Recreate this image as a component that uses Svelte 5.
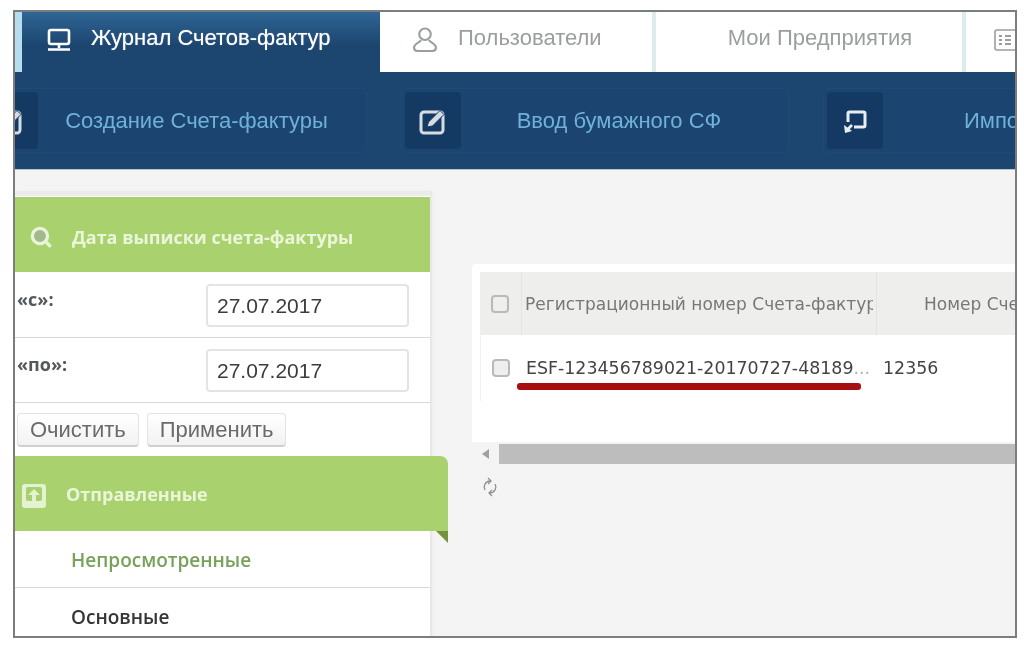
<script>
	const tools = [
		{ title: 'Создание Счета-фактуры', icon: 'create' },
		{ title: 'Ввод бумажного СФ', icon: 'edit' },
		{ title: 'Импорт', icon: 'import' }
	];
</script>

<div class="page">
	<div class="frame">
		<nav class="tabs">
			<div class="tab active">
				<svg width="26" height="24" viewBox="0 0 26 24" fill="none" stroke="currentColor" stroke-width="2.6">
					<rect x="3" y="2" width="20" height="14" rx="2" />
					<path d="M13 16v4M2 21.500h22" />
				</svg>
				<span>Журнал Счетов-фактур</span>
			</div>
			<div class="tab users">
				<svg width="30" height="28" viewBox="0 0 26 24" fill="none" stroke="currentColor" stroke-width="1.800">
					<circle cx="13" cy="7" r="5" />
					<path d="M9.500 12c-.5 2-6 3-6 6.500c0 2 1 3 3 3h13c2 0 3-1 3-3c0-3.500-5.500-4.500-6-6.500" />
				</svg>
				<span>Пользователи</span>
			</div>
			<div class="tab firms"><span>Мои Предприятия</span></div>
			<div class="tab last">
				<svg width="22" height="24" viewBox="0 0 22 24" fill="none" stroke="currentColor" stroke-width="1.600">
					<rect x="1" y="2" width="24" height="20" rx="2" />
					<path d="M5 8h3M5 12h3M5 16h3M11 8h6M11 12h6M11 16h6" stroke-width="2" />
				</svg>
			</div>
		</nav>

		<div class="toolbar">
			{#each tools as tool}
				<div class="tool {tool.icon}">
					<div class="tool-icon">
						{#if tool.icon === 'import'}
							<svg width="26" height="26" viewBox="0 0 26 26" fill="none" stroke="#e8eef2" stroke-width="3">
								<path d="M6 14V5.500c0-1 .5-1.500 1.500-1.500h14c1 0 1.500.5 1.500 1.500v12c0 1-.5 1.500-1.500 1.500H12" />
								<path d="M10 17l-5 5" stroke-width="2.600" />
								<path d="M2 17l1 8 7-2z" fill="#e8eef2" stroke="none" />
							</svg>
						{:else}
							<svg width="28" height="28" viewBox="0 0 28 28" fill="none">
								<rect x="2" y="5" width="22" height="21" rx="3" stroke="#d5dde2" stroke-width="3" />
								<path d="M8 20l1.500-5L21 3.500l4 4L13.500 19z" fill="#d5dde2" stroke="#143a63" stroke-width="1" />
							</svg>
						{/if}
					</div>
					<span class="tool-title">{tool.title}</span>
				</div>
			{/each}
		</div>

		<div class="content">
			<aside class="sidebar">
				<div class="filter-head">
					<svg width="26" height="26" viewBox="0 0 24 24" fill="#a3b98b" stroke="#e9f5d8" stroke-width="3">
						<circle cx="11" cy="11" r="7" />
						<path d="M16 16l5 5" />
					</svg>
					<span>Дата выписки счета-фактуры</span>
				</div>
				<div class="date-row">
					<span class="date-label">«с»:</span>
					<div class="date-input">27.07.2017</div>
				</div>
				<div class="date-row">
					<span class="date-label">«по»:</span>
					<div class="date-input">27.07.2017</div>
				</div>
				<div class="buttons">
					<button>Очистить</button>
					<button>Применить</button>
				</div>
				<div class="section">
					<svg width="26" height="28" viewBox="0 0 26 28" fill="none">
						<rect x="1" y="2" width="24" height="24" rx="3" fill="#e4f2cf" />
						<rect x="5" y="5" width="16" height="14" rx="2" fill="#a8d070" />
						<path d="M13 7l6 6h-4v6h-4v-6H7z" fill="#e4f2cf" />
					</svg>
					<span>Отправленные</span>
					<i class="fold"></i>
				</div>
				<div class="menu-item current">Непросмотренные</div>
				<div class="menu-item">Основные</div>
			</aside>

			<section class="grid-area">
				<div class="grid-card">
					<div class="grid-row head">
						<div class="cell check"><i class="checkbox"></i></div>
						<div class="cell reg"><span class="clip">Регистрационный номер Счета-фактуры</span></div>
						<div class="cell num">Номер Счета-фактуры</div>
					</div>
					<div class="grid-row body">
						<div class="cell check"><i class="checkbox"></i></div>
						<div class="cell reg">
							<span class="clip">ESF-123456789021-20170727-48189<span class="dots">...</span></span>
							<i class="mark"></i>
						</div>
						<div class="cell num">12356</div>
					</div>
				</div>
				<div class="scrollbar">
					<i class="arrow"></i>
					<div class="thumb"></div>
				</div>
				<svg class="refresh" width="16" height="20" viewBox="0 0 16 20" fill="none" stroke="#8d918c" stroke-width="1.300">
					<path d="M3 13a6 6 0 0 1 5-9M13 7a6 6 0 0 1-5 9" />
					<path d="M6 1l3 3-3 3M10 13l-3 3 3 3" />
				</svg>
			</section>
		</div>
	</div>
</div>

<style>
	:global(body) {
		margin: 0;
		background: #fff;
	}

	.page {
		width: 1024px;
		height: 646px;
		padding: 10px 7px 8px 13px;
		box-sizing: border-box;
		font-family: "Liberation Sans", Arial, sans-serif;
	}

	.frame {
		height: 628px;
		box-sizing: border-box;
		border: 2px solid #7d7d7d;
		overflow: hidden;
		background: #f4f4f4;
		filter: blur(0.45px);
	}

	.tabs {
		display: flex;
		height: 60px;
		background: #fff;
		font-size: 22px;
		color: #9a9e9e;
	}

	.tab {
		display: flex;
		align-items: center;
		box-sizing: border-box;
		padding-bottom: 8px;
		flex: none;
		border-left: 7px solid #dcebec;
		white-space: nowrap;
	}

	.tab svg {
		flex: none;
		margin-top: 4px;
	}

	.tab.active {
		width: 365px;
		padding-left: 24px;
		gap: 19px;
		color: #fff;
		border-left-color: #b5dcef;
		background: linear-gradient(#2f6595, #1c4670 55%);
		text-shadow: 0 0 1px rgba(255, 255, 255, 0.6);
	}

	.tab.users {
		width: 272px;
		padding-left: 30px;
		gap: 18px;
		border-left: 0;
	}

	.tab.firms {
		width: 310px;
		justify-content: center;
		border-left: 4px solid #dcebec;
		padding-left: 22px;
	}

	.tab.last {
		flex: 1;
		min-width: 0;
		padding-left: 28px;
		border-left: 4px solid #dcebec;
		overflow: hidden;
	}

	.toolbar {
		display: flex;
		height: 98px;
		padding-top: 16px;
		box-sizing: border-box;
		gap: 34px;
		background: #1c4670;
		border-bottom: 1px solid #b5c6d4;
		margin-left: -37px;
	}

	.tool {
		display: flex;
		flex: none;
		align-items: center;
		height: 65px;
		box-sizing: border-box;
		padding: 0 3px;
		border: 1px solid #1f4a75;
		border-radius: 5px;
		background: #1b4470;
		font-size: 22px;
		color: #6fb1d8;
	}

	.tool-icon {
		display: flex;
		align-items: center;
		justify-content: center;
		flex: none;
		width: 56px;
		height: 57px;
		border-radius: 4px;
		background: #143a63;
	}

	.tool.create {
		width: 389px;
	}

	.tool.edit {
		width: 388px;
	}

	.tool.import {
		width: 300px;
	}

	.tool-title {
		flex: 1;
		padding-right: 8px;
		text-align: center;
		white-space: nowrap;
	}

	.tool.import .tool-title {
		text-align: left;
		padding: 0 0 0 81px;
	}

	.content {
		display: flex;
		height: 466px;
		padding-top: 21px;
		box-sizing: border-box;
	}

	.sidebar {
		flex: none;
		width: 415px;
		background: #fff;
		border-top: 5px solid #ececec;
		box-shadow: 2px 0 0 #e8e8e8, 3px 0 2px #ededed;
		font-family: "Open Sans", sans-serif;
	}

	.filter-head {
		display: flex;
		align-items: center;
		gap: 18px;
		height: 75px;
		margin: 1px 0;
		padding: 4px 0 0 13px;
		box-sizing: border-box;
		background: #a9d26f;
		font-size: 18px;
		font-weight: 700;
		color: #eaf6da;
		white-space: nowrap;
	}

	.date-row {
		display: flex;
		justify-content: space-between;
		height: 65px;
		padding: 11px 21px 0 0;
		box-sizing: border-box;
		border-bottom: 1px solid #d8d8d8;
	}

	.date-label {
		padding: 3px 0 0 2px;
		font-size: 18px;
		font-weight: 700;
		color: #55595c;
	}

	.date-input {
		width: 203px;
		height: 43px;
		box-sizing: border-box;
		padding: 8px 0 0 9px;
		border: 2px solid #e4e4e4;
		border-radius: 4px;
		font-family: "Liberation Sans", sans-serif;
		font-size: 21px;
		color: #3c3c3c;
	}

	.buttons {
		display: flex;
		gap: 8px;
		height: 53px;
		padding: 10px 0 0 2px;
		box-sizing: border-box;
	}

	.buttons button {
		height: 34px;
		padding: 0 12px;
		border: 1px solid #e3e3e3;
		border-bottom: 2px solid #cfcfcf;
		border-radius: 4px;
		background: linear-gradient(#fff, #f2f2f2);
		font-family: "Liberation Sans", sans-serif;
		font-size: 22px;
		color: #6a6a6a;
	}

	.section {
		position: relative;
		display: flex;
		align-items: center;
		gap: 19px;
		width: 433px;
		height: 75px;
		padding: 0 0 0 6px;
		box-sizing: border-box;
		border-radius: 0 8px 0 0;
		background: #a9d26f;
		font-size: 18px;
		font-weight: 700;
		color: #eaf6da;
	}

	.section svg {
		margin-top: 5px;
	}

	.fold {
		position: absolute;
		right: 0;
		top: 100%;
		border-top: 12px solid #75923f;
		border-left: 12px solid transparent;
	}

	.menu-item {
		height: 56px;
		padding: 16px 0 0 56px;
		box-sizing: border-box;
		border-bottom: 1px solid #d8d8d8;
		font-size: 19px;
		font-weight: 600;
		color: #353535;
	}

	.menu-item.current {
		height: 57px;
		color: #78a15a;
	}

	.grid-area {
		flex: 1;
		min-width: 0;
		padding: 73px 0 0 42px;
	}

	.grid-card {
		height: 178px;
		padding: 8px 0 0 8px;
		box-sizing: border-box;
		border-radius: 4px 0 0 0;
		background: #fff;
		overflow: hidden;
		font-family: "DejaVu Sans", sans-serif;
		font-size: 17.400px;
		color: #55595c;
	}

	.grid-row {
		display: flex;
		white-space: nowrap;
	}

	.grid-row.head {
		height: 63px;
		background: #eeefec;
		color: #777;
		font-size: 17px;
	}

	.grid-row.body {
		height: 66px;
		border-left: 1px solid #f1f1f1;
		color: #444;
	}

	.cell {
		display: flex;
		flex: none;
		align-items: center;
		box-sizing: border-box;
		overflow: hidden;
	}

	.head .cell {
		border-right: 1px solid #e4e5e2;
	}

	.check {
		width: 42px;
		padding-left: 11px;
	}

	.reg {
		position: relative;
		width: 355px;
		padding-left: 3px;
	}

	.clip {
		display: block;
		width: 348px;
		overflow: hidden;
	}

	.dots {
		color: #b0b0b0;
	}

	.num {
		padding-left: 5px;
	}

	.head .num {
		padding-left: 47px;
		border-right: 0;
	}

	.mark {
		position: absolute;
		left: -6px;
		top: 48px;
		width: 344px;
		height: 7px;
		border-radius: 3px;
		background: #a80f0f;
	}

	.reg:has(.mark) {
		overflow: visible;
	}

	.checkbox {
		display: block;
		width: 18px;
		height: 18px;
		box-sizing: border-box;
		border: 2px solid #b9b9b9;
		border-radius: 4px;
		background: #eeeeee;
	}

	.scrollbar {
		display: flex;
		align-items: center;
		height: 20px;
		margin-top: 2px;
	}

	.arrow {
		flex: none;
		margin: 0 10px 0 10px;
		border-right: 7px solid #a0a0a0;
		border-top: 5px solid transparent;
		border-bottom: 5px solid transparent;
	}

	.thumb {
		flex: 1;
		height: 20px;
		background: #bdbdbd;
	}

	.refresh {
		display: block;
		margin: 13px 0 0 10px;
	}
</style>
